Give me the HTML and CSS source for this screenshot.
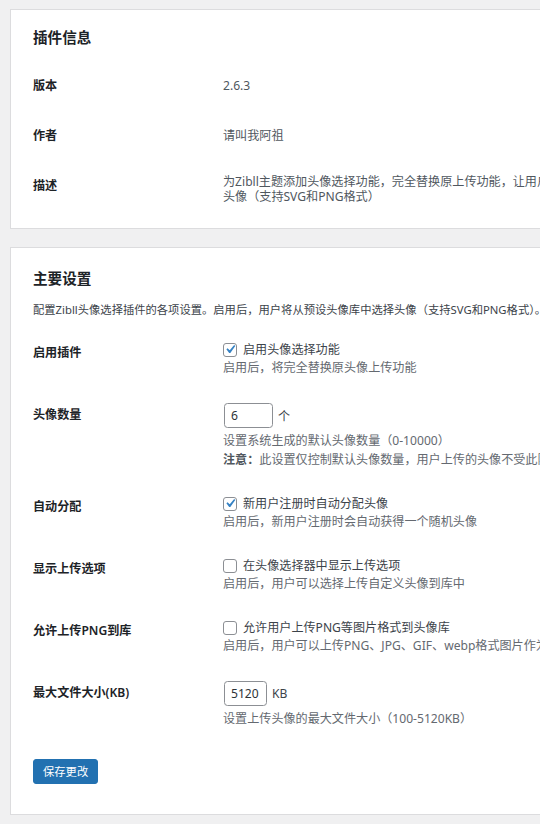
FILE: index.html
```html
<!DOCTYPE html>
<html lang="zh-CN">
<head>
<meta charset="utf-8">
<title>Zibll 头像选择设置</title>
<link rel="stylesheet" href="styles.css">
</head>
<body>
<div class="wrap">
  <section class="card card-info">
    <h2 class="card-title">插件信息</h2>
    <div class="info-row">
      <div class="info-label">版本</div>
      <div class="info-value">2.6.3</div>
    </div>
    <div class="info-row">
      <div class="info-label">作者</div>
      <div class="info-value">请叫我阿祖</div>
    </div>
    <div class="info-row">
      <div class="info-label">描述</div>
      <div class="info-value info-value-multi">为Zibll主题添加头像选择功能，完全替换原上传功能，让用户从预设头像库中选择<br>头像（支持SVG和PNG格式）</div>
    </div>
  </section>

  <section class="card card-settings">
    <h2 class="card-title">主要设置</h2>
    <p class="card-intro">配置Zibll头像选择插件的各项设置。启用后，用户将从预设头像库中选择头像（支持SVG和PNG格式）。</p>

    <div class="set-row">
      <div class="set-label">启用插件</div>
      <div class="set-field">
        <label class="check-line"><span class="checkbox is-checked"><svg viewBox="3 3 14 14" width="14" height="14"><path d="M14.83 4.89l1.34.94-5.81 8.38H9.02L5.78 9.67l1.34-1.25 2.57 2.4z"/></svg></span>启用头像选择功能</label>
        <p class="desc">启用后，将完全替换原头像上传功能</p>
      </div>
    </div>

    <div class="set-row">
      <div class="set-label">头像数量</div>
      <div class="set-field">
        <div class="input-line"><input class="text-input input-count" type="text" value="6"><span>个</span></div>
        <p class="desc desc-after-input">设置系统生成的默认头像数量（0-10000）</p>
        <p class="desc"><strong>注意：</strong>此设置仅控制默认头像数量，用户上传的头像不受此限制</p>
      </div>
    </div>

    <div class="set-row">
      <div class="set-label">自动分配</div>
      <div class="set-field">
        <label class="check-line"><span class="checkbox is-checked"><svg viewBox="3 3 14 14" width="14" height="14"><path d="M14.83 4.89l1.34.94-5.81 8.38H9.02L5.78 9.67l1.34-1.25 2.57 2.4z"/></svg></span>新用户注册时自动分配头像</label>
        <p class="desc">启用后，新用户注册时会自动获得一个随机头像</p>
      </div>
    </div>

    <div class="set-row">
      <div class="set-label">显示上传选项</div>
      <div class="set-field">
        <label class="check-line"><span class="checkbox"></span>在头像选择器中显示上传选项</label>
        <p class="desc">启用后，用户可以选择上传自定义头像到库中</p>
      </div>
    </div>

    <div class="set-row">
      <div class="set-label">允许上传PNG到库</div>
      <div class="set-field">
        <label class="check-line"><span class="checkbox"></span>允许用户上传PNG等图片格式到头像库</label>
        <p class="desc">启用后，用户可以上传PNG、JPG、GIF、webp格式图片作为头像</p>
      </div>
    </div>

    <div class="set-row">
      <div class="set-label">最大文件大小(KB)</div>
      <div class="set-field">
        <div class="input-line"><input class="text-input input-size" type="text" value="5120"><span>KB</span></div>
        <p class="desc desc-after-input">设置上传头像的最大文件大小（100-5120KB）</p>
      </div>
    </div>

    <button class="button-primary" type="button">保存更改</button>
  </section>
</div>
</body>
</html>
```

FILE: styles.css
```css
html, body {
  margin: 0;
  overflow: hidden;
  background: #f0f0f1;
}

body {
  font-family: "Noto Sans", "Noto Sans CJK SC", sans-serif;
  color: #3c434a;
  font-size: 11.3px;
}

.wrap {
  width: 720px;
  padding: 9px 0 0 10px;
  display: flex;
  flex-direction: column;
  gap: 18px;
}

.card {
  background: #fff;
  border: 1px solid #dcdcde;
  padding: 0 22px;
  display: flex;
  flex-direction: column;
  align-items: stretch;
}

.card-info {
  padding-top: 17px;
  padding-bottom: 11px;
}

.card-settings {
  padding-top: 20px;
  padding-bottom: 30px;
}

.card-title {
  margin: 0;
  font-size: 14.6px;
  line-height: 20px;
  font-weight: 600;
  color: #1d2327;
}

.card-info .card-title {
  margin-bottom: 14px;
}

.card-settings .card-title {
  margin-bottom: 12px;
}

.card-intro {
  margin: 0 0 8px;
  line-height: 20px;
  font-size: 11.3px;
  color: #3c434a;
  white-space: nowrap;
}

/* info rows */
.info-row {
  display: grid;
  grid-template-columns: 190px 1fr;
  align-items: start;
  padding: 13px 0;
}

.info-label {
  font-size: 12.1px;
  font-weight: 600;
  line-height: 24px;
  color: #1d2327;
}

.info-value {
  font-size: 12.1px;
  line-height: 24px;
  color: #50575e;
}

.info-value-multi {
  line-height: 15px;
  white-space: nowrap;
}

/* settings rows */
.set-row {
  display: grid;
  grid-template-columns: 190px 1fr;
  align-items: start;
}

.set-label {
  padding-top: 17px;
  font-size: 12.1px;
  font-weight: 600;
  line-height: 16px;
  color: #1d2327;
}

.set-field {
  padding: 13px 0;
  font-size: 12.1px;
  color: #3c434a;
}

.check-line {
  display: flex;
  align-items: center;
  gap: 6px;
  height: 17px;
  line-height: 17px;
  white-space: nowrap;
}

.checkbox {
  box-sizing: border-box;
  width: 14px;
  height: 14px;
  border: 1px solid #8c8f94;
  border-radius: 3px;
  background: #fff;
  display: inline-flex;
  align-items: center;
  justify-content: center;
  flex: none;
}

.checkbox svg {
  display: block;
  fill: #3582c4;
  width: 13px;
  height: 13px;
}

.desc {
  margin: 0;
  line-height: 19px;
  font-size: 12.1px;
  color: #646970;
  white-space: nowrap;
}

.desc strong {
  font-weight: 600;
  color: #50575e;
}

.desc-after-input {
  margin-top: 3px;
}

.input-line {
  display: flex;
  align-items: center;
  gap: 4px;
  height: 25px;
}

.text-input {
  box-sizing: border-box;
  height: 25px;
  margin: 0 1px;
  padding: 0 6px;
  border: 1px solid #8c8f94;
  border-radius: 3.5px;
  background: #fff;
  font-family: "Noto Sans", "Noto Sans CJK SC", sans-serif;
  font-size: 12.1px;
  color: #2c3338;
}

.input-count {
  width: 49px;
}

.input-size {
  width: 43px;
}

.button-primary {
  align-self: flex-start;
  margin-top: 18px;
  height: 25px;
  padding: 0 9px;
  border: 1px solid #2271b1;
  border-radius: 3px;
  background: #2271b1;
  color: #fff;
  font-family: "Noto Sans", "Noto Sans CJK SC", sans-serif;
  font-size: 11.3px;
  line-height: 23px;
}
```
